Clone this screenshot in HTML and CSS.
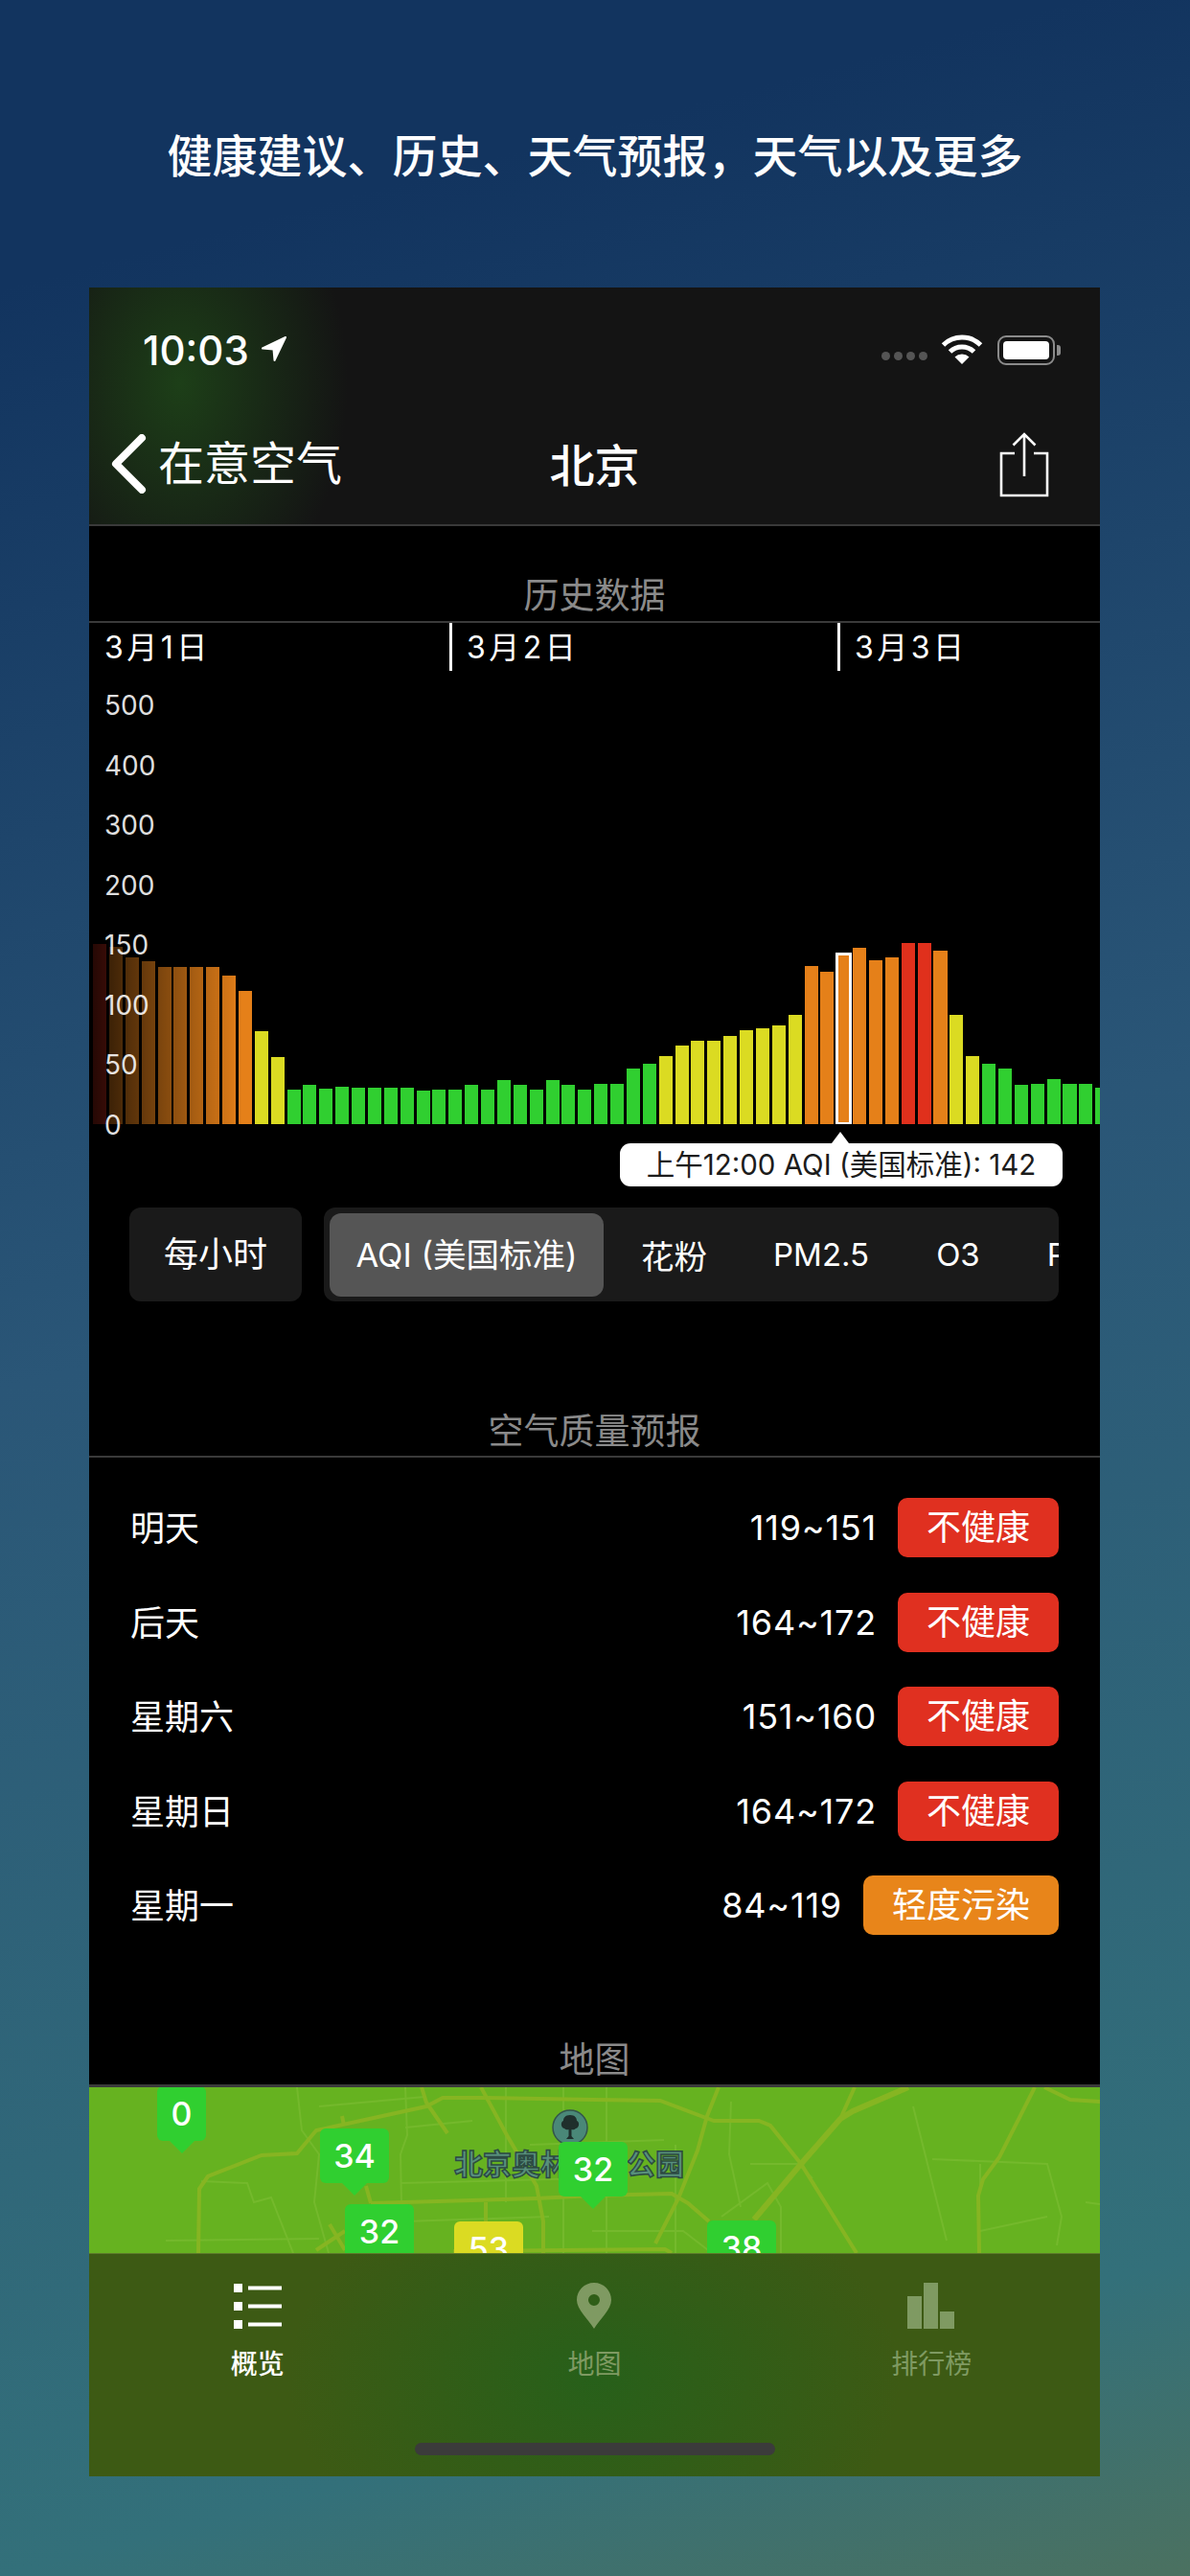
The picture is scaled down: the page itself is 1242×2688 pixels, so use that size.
FILE: index.html
```html
<!DOCTYPE html>
<html lang="zh-CN">
<head>
  <meta charset="UTF-8" />
  <meta name="viewport" content="width=device-width, initial-scale=1.0"/>
  <title>在意空气 - 北京</title>
  <link rel="stylesheet" href="styles.css">
</head>
<body>
  <h1 class="hero">健康建议、历史、天气预报，天气以及更多</h1>

  <div class="phone">
    <header class="top">
      <div class="status">
        <span class="clock">10:03</span>
        <svg class="loc-arrow" width="28" height="28" viewBox="0 0 28 28"><path d="M26 2 L2 13.500 L13.500 14.500 L14.500 26 Z" fill="#fff" stroke="#fff" stroke-width="2" stroke-linejoin="round"/></svg>
        <div class="status-right">
          <div class="signal"><i></i><i></i><i></i><i></i></div>
          <svg width="44" height="32" viewBox="0 0 44 32">
            <path d="M2.5 11 A28 28 0 0 1 41.5 11" fill="none" stroke="#fff" stroke-width="5"/>
            <path d="M9.5 18 A18 18 0 0 1 34.5 18" fill="none" stroke="#fff" stroke-width="5"/>
            <path d="M22 31 L14.5 23.5 A11 11 0 0 1 29.5 23.5 Z" fill="#fff"/>
          </svg>
          <div class="battery"><div class="battery-fill"></div></div>
          <div class="battery-nub"></div>
        </div>
      </div>
      <nav class="navbar">
        <div class="nav-back">
          <svg width="38" height="62" viewBox="0 0 38 62"><path d="M33 4 L6 31 L33 58" fill="none" stroke="#fff" stroke-width="8" stroke-linecap="round" stroke-linejoin="round"/></svg>
          <span>在意空气</span>
        </div>
        <div class="nav-title">北京</div>
        <svg class="nav-share" width="54" height="68" viewBox="0 0 54 68">
          <path d="M17 22 H3 V66 H51 V22 H37" fill="none" stroke="#fff" stroke-width="2.6"/>
          <path d="M27 46 V2 M15.5 13.5 L27 2 L38.5 13.5" fill="none" stroke="#fff" stroke-width="2.6"/>
        </svg>
      </nav>
    </header>

    <h2 class="section-title history-title">历史数据</h2>

    <div class="dates">
      <div class="date-cell first">3月1日</div>
      <div class="date-cell second">3月2日</div>
      <div class="date-cell">3月3日</div>
    </div>

    <div class="chart">
      <div class="bars">
        <div class="bar red" style="height:188px"></div><div class="bar orange" style="height:185px"></div><div class="bar orange" style="height:174px"></div><div class="bar orange" style="height:170px"></div>
        <div class="bar orange" style="height:164px"></div><div class="bar orange" style="height:164px"></div><div class="bar orange" style="height:164px"></div><div class="bar orange" style="height:164px"></div>
        <div class="bar orange" style="height:155px"></div><div class="bar orange" style="height:139px"></div><div class="bar yellow" style="height:97px"></div><div class="bar yellow" style="height:70px"></div>
        <div class="bar green" style="height:36px"></div><div class="bar green" style="height:41px"></div><div class="bar green" style="height:37px"></div><div class="bar green" style="height:39px"></div>
        <div class="bar green" style="height:38px"></div><div class="bar green" style="height:38px"></div><div class="bar green" style="height:38px"></div><div class="bar green" style="height:38px"></div>
        <div class="bar green" style="height:35px"></div><div class="bar green" style="height:36px"></div><div class="bar green" style="height:36px"></div><div class="bar green" style="height:41px"></div>
        <div class="bar green" style="height:36px"></div><div class="bar green" style="height:46px"></div><div class="bar green" style="height:41px"></div><div class="bar green" style="height:36px"></div>
        <div class="bar green" style="height:46px"></div><div class="bar green" style="height:41px"></div><div class="bar green" style="height:36px"></div><div class="bar green" style="height:42px"></div>
        <div class="bar green" style="height:42px"></div><div class="bar green" style="height:58px"></div><div class="bar green" style="height:63px"></div><div class="bar yellow" style="height:71px"></div>
        <div class="bar yellow" style="height:82px"></div><div class="bar yellow" style="height:87px"></div><div class="bar yellow" style="height:87px"></div><div class="bar yellow" style="height:92px"></div>
        <div class="bar yellow" style="height:98px"></div><div class="bar yellow" style="height:100px"></div><div class="bar yellow" style="height:103px"></div><div class="bar yellow" style="height:114px"></div>
        <div class="bar orange" style="height:165px"></div><div class="bar orange" style="height:159px"></div><div class="bar orange selected" style="height:174px"></div><div class="bar orange" style="height:184px"></div>
        <div class="bar orange" style="height:171px"></div><div class="bar orange" style="height:174px"></div><div class="bar red" style="height:189px"></div><div class="bar red" style="height:189px"></div>
        <div class="bar orange" style="height:181px"></div><div class="bar yellow" style="height:114px"></div><div class="bar yellow" style="height:71px"></div><div class="bar green" style="height:63px"></div>
        <div class="bar green" style="height:58px"></div><div class="bar green" style="height:41px"></div><div class="bar green" style="height:42px"></div><div class="bar green" style="height:47px"></div>
        <div class="bar green" style="height:42px"></div><div class="bar green" style="height:42px"></div><div class="bar green" style="height:38px"></div>
      </div>
      <div class="bars-fade"></div>
      <div class="y-axis">
        <span>500</span><span>400</span><span>300</span><span>200</span><span>150</span><span>100</span><span>50</span><span>0</span>
      </div>
      <div class="tooltip">上午12:00 AQI (美国标准): 142</div>
    </div>

    <div class="controls">
      <div class="hourly">每小时</div>
      <div class="segments">
        <div class="segment active">AQI (美国标准)</div>
        <div class="segment cjk">花粉</div>
        <div class="segment">PM2.5</div>
        <div class="segment">O3</div>
        <div class="segment">PM10</div>
      </div>
    </div>

    <h2 class="section-title forecast-title">空气质量预报</h2>

    <div class="forecast">
      <div class="row"><span class="day">明天</span><span class="range">119~151</span><span class="level bad">不健康</span></div>
      <div class="row"><span class="day">后天</span><span class="range">164~172</span><span class="level bad">不健康</span></div>
      <div class="row"><span class="day">星期六</span><span class="range">151~160</span><span class="level bad">不健康</span></div>
      <div class="row"><span class="day">星期日</span><span class="range">164~172</span><span class="level bad">不健康</span></div>
      <div class="row"><span class="day">星期一</span><span class="range">84~119</span><span class="level light">轻度污染</span></div>
    </div>

    <h2 class="section-title map-title">地图</h2>

    <div class="map">
      <svg class="roads" width="1055" height="173" viewBox="0 0 1055 173">
        <g fill="none" stroke="#74b92c" stroke-width="2">
          <path d="M217 0 L222 45 L240 70 L235 120 L250 173"/>
          <path d="M330 0 L332 50 L325 70 L327 173"/>
          <path d="M240 20 L350 10 M330 42 L400 35 M325 100 L520 95 M330 140 L480 135"/>
          <path d="M117 98 L165 100 L172 120 L190 115 L213 173"/>
          <path d="M80 160 L240 158"/>
          <path d="M435 0 V120 M495 0 V173 M540 0 V173 M612 60 V173 M460 60 L600 55"/>
          <path d="M525 150 H620 L650 173"/>
          <path d="M670 15 L668 70 L680 125 M660 135 L708 100 L722 125 V173 M690 80 H740 L755 95"/>
          <path d="M860 20 L875 80 L895 160 M880 75 L1000 80 L1015 135 L1010 165 M930 150 L1000 135 M1040 120 L1055 122"/>
          <path d="M930 80 V110"/>
        </g>
        <g fill="none" stroke="#86b522" stroke-width="4">
          <path d="M114 173 L115 106 L124 93 L180 71 L217 69 L237 45 L352 20 L369 11 L409 11 L527 13 L596 14 L652 35 L699 35 L711 40 L743 80 L801 173"/>
          <path d="M591 163 L615 116 L635 66 L645 30 L657 0"/>
          <path d="M784 33 L799 0"/>
          <path d="M929 173 L928 113 L933 96 L950 73 L987 0"/>
          <path d="M997 0 L1024 13 L1057 15"/>
          <path d="M294 121 L467 116 L527 113 L608 111 L625 121 L647 140"/>
          <path d="M289 103 L294 121 M264 30 L266 40"/>
          <path d="M347 0 L352 16 L374 48"/>
          <path d="M409 0 L436 50 L467 103 L474 140 L474 173"/>
          <path d="M414 120 V173 M237 170 L267 150 M251 143 L267 170"/>
          <path d="M380 171 L601 169 L608 173"/>
        </g>
        <path d="M694 138 L743 80 L784 33 L797 25 L855 0" fill="none" stroke="#86b522" stroke-width="6"/>
      </svg>

      <svg class="park-icon" width="38" height="38" viewBox="0 0 38 38">
        <circle cx="19" cy="19" r="18" fill="#4a8878" stroke="#33544c" stroke-width="1.5"/>
        <path d="M19 6 C24 6 26 9 26 12 C29 13 29 19 25 20 C23 22 21 21 20.500 21 V28 L23 31 H15 L17.500 28 V21 C17 21 15 22 13 20 C9 19 9 13 12 12 C12 9 14 6 19 6 Z" fill="#1f2f2c"/>
      </svg>
      <div class="park-label">北京奥林匹克公园</div>

      <div class="pin green narrow pin-a">0</div>
      <div class="pin green pin-b">34</div>
      <div class="pin green pin-c">32</div>
      <div class="pin yellow pin-d">53</div>
      <div class="pin green pin-e">32</div>
      <div class="pin green pin-f">38</div>

      <div class="tabbar">
        <div class="tab active">
          <svg width="50" height="48" viewBox="0 0 50 48" fill="#fff">
            <rect x="0" y="1" width="9" height="9"/><rect x="15" y="3.500" width="35" height="4"/>
            <rect x="0" y="20" width="9" height="9"/><rect x="15" y="22.500" width="35" height="4"/>
            <rect x="0" y="39" width="9" height="9"/><rect x="15" y="41.500" width="35" height="4"/>
          </svg>
          <span>概览</span>
        </div>
        <div class="tab">
          <svg width="36" height="48" viewBox="0 0 36 48"><path fill-rule="evenodd" d="M18 0 C28 0 36 8 36 18 C36 28 24 38 18 48 C12 38 0 28 0 18 C0 8 8 0 18 0 Z M18 12 A6 6 0 1 0 18 24 A6 6 0 1 0 18 12 Z" fill="#7f9a62"/></svg>
          <span>地图</span>
        </div>
        <div class="tab">
          <svg width="50" height="48" viewBox="0 0 50 48" fill="#7f9a62">
            <rect x="0" y="14" width="15" height="34"/><rect x="17" y="0" width="15" height="48"/><rect x="34" y="30" width="15" height="18"/>
          </svg>
          <span>排行榜</span>
        </div>
        <div class="home-indicator"></div>
      </div>
    </div>
  </div>
</body>
</html>
```
FILE: styles.css
```css
* {
  box-sizing: border-box;
}
body {
  margin: 0;
  width: 1242px;
  height: 2688px;
  overflow: hidden;
  font-family: "Inter", "Noto Sans CJK SC", sans-serif;
  background: linear-gradient(165deg, #12345f 10%, #2a5677 48%, #33707a 89%, #4b7160 100%);
  color: #fff;
}
.hero {
  margin: 0;
  height: 300px;
  padding-top: 132px;
  font-size: 47px;
  line-height: 62px;
  font-weight: 500;
  text-align: center;
}
.phone {
  position: relative;
  width: 1055px;
  height: 2284px;
  margin-left: 93px;
  background: black;
  overflow: hidden;
}

/* status bar + nav */
.top {
  height: 249px;
  border-bottom: 2px solid #3a3a3a;
  background: radial-gradient(ellipse 175px 250px at 95px 100px, #1d3f18 0%, rgba(29,63,24,0.55) 45%, rgba(29,63,24,0) 100%), #141414;
}
.status {
  display: flex;
  align-items: center;
  height: 130px;
  padding: 0 41px 0 56px;
}
.clock {
  font-size: 42px;
  font-weight: 500;
  width: 123px;
}
.loc-arrow {
  margin-top: -2px;
}
.status-right {
  margin-left: auto;
  display: flex;
  align-items: center;
}
.signal {
  display: flex;
  gap: 4px;
  margin-right: 14px;
  margin-top: 12px;
}
.signal i {
  width: 9px;
  height: 9px;
  border-radius: 50%;
  background: #555;
}
.battery {
  width: 60px;
  height: 31px;
  margin-left: 15px;
  padding: 4px;
  border: 2px solid #8b8b8b;
  border-radius: 9px;
}
.battery-fill {
  height: 100%;
  border-radius: 4px;
  background: white;
}
.battery-nub {
  width: 4px;
  height: 11px;
  margin-left: 2px;
  border-radius: 0 3px 3px 0;
  background: #8b8b8b;
}
.navbar {
  display: grid;
  grid-template-columns: 1fr auto 1fr;
  align-items: center;
  height: 108px;
  padding: 0 22px;
}
.nav-back {
  display: flex;
  align-items: center;
  gap: 12px;
  font-size: 48px;
  line-height: 60px;
}
.nav-title {
  font-size: 47px;
  font-weight: 500;
  margin-top: -3px;
}
.nav-share {
  justify-self: end;
  margin-right: 30px;
  margin-top: 2px;
}

/* section headings */
.section-title {
  margin: 0;
  display: flex;
  align-items: flex-end;
  justify-content: center;
  border-bottom: 2px solid #3a3a3a;
  font-size: 37px;
  font-weight: 400;
  line-height: 50px;
  color: #8a8a8a;
}
.history-title {
  height: 101px;
  padding-bottom: 1px;
}
.forecast-title {
  height: 163px;
}
.map-title {
  height: 140px;
  border-bottom-width: 3px;
}

/* chart */
.dates {
  display: flex;
  height: 50px;
  font-size: 32px;
  line-height: 52px;
  letter-spacing: 3.5px;
}
.date-cell {
  padding-left: 15px;
  border-left: 3px solid white;
}
.date-cell.first {
  width: 376px;
  padding-left: 16px;
  border-left: 0;
}
.date-cell.second {
  width: 405px;
}
.chart {
  position: relative;
  height: 560px;
}
.bars {
  display: flex;
  align-items: flex-end;
  gap: 2.85px;
  height: 473px;
  padding-left: 4px;
  overflow: hidden;
}
.bar {
  flex: none;
  width: 14.04px;
}
.bar.green { background: #30cf30; }
.bar.yellow { background: #dbdb22; }
.bar.orange { background: #e58019; }
.bar.red { background: #e0301c; }
.bar.selected {
  box-sizing: content-box;
  width: 11px;
  margin: 0 -1.500px;
  border: 3px solid white;
  border-bottom-width: 2px;
}
.bars-fade {
  position: absolute;
  top: 0;
  left: 0;
  width: 160px;
  height: 473px;
  background: linear-gradient(to right, rgba(0,0,0,0.85), rgba(0,0,0,0));
}
.y-axis {
  position: absolute;
  top: 5px;
  left: 16px;
  display: grid;
  grid-auto-rows: 62.5px;
  font-size: 28px;
  line-height: 62.5px;
  color: rgba(255,255,255,0.88);
}
.tooltip {
  position: absolute;
  top: 493px;
  left: 554px;
  width: 462px;
  height: 45px;
  border-radius: 11px;
  background: white;
  color: #1c1c1c;
  font-size: 29.500px;
  line-height: 45px;
  text-align: center;
}
.tooltip::before {
  content: "";
  position: absolute;
  top: -12px;
  left: 221px;
  border: 9px solid transparent;
  border-top: 0;
  border-bottom: 12px solid white;
}

/* selectors under the chart */
.controls {
  display: flex;
  gap: 23px;
  height: 98px;
  padding: 0 43px 0 42px;
  font-size: 33px;
}
.hourly {
  flex: none;
  width: 180px;
  border-radius: 12px;
  background: #1a1a1a;
  font-size: 36px;
  line-height: 98px;
  text-align: center;
}
.segments {
  flex: 1;
  display: flex;
  align-items: center;
  padding-left: 6px;
  border-radius: 12px;
  background: #1a1a1a;
  overflow: hidden;
  white-space: nowrap;
}
.segment {
  flex: none;
  padding: 0 35px;
}
.segment.cjk {
  font-size: 34.500px;
  padding: 0 34px;
}
.segment.active {
  width: 286px;
  height: 87px;
  margin-right: 5px;
  padding: 0;
  border-radius: 12px;
  background: #555;
  font-size: 34.500px;
  line-height: 87px;
  text-align: center;
}

/* forecast */
.forecast {
  padding-top: 24px;
}
.row {
  display: flex;
  align-items: center;
  height: 98.5px;
  padding: 0 43px;
  font-size: 36px;
}
.day {
  margin-right: auto;
  margin-top: -4px;
}
.range {
  margin-right: 22px;
  letter-spacing: 0.8px;
}
.level {
  height: 62px;
  padding: 0 30px;
  border-radius: 10px;
  line-height: 62px;
}
.level.bad { background: #e03020; }
.level.light { background: #e8851a; }

/* map */
.map {
  position: relative;
  height: 407px;
  background: #66b220;
  overflow: hidden;
}
.roads {
  position: absolute;
  top: 0;
  left: 0;
}
.park-icon {
  position: absolute;
  top: 23px;
  left: 483px;
}
.park-label {
  position: absolute;
  top: 60px;
  left: 381px;
  font-size: 30px;
  line-height: 40px;
  font-weight: 700;
  color: #58907c;
  -webkit-text-stroke: 1.5px #2c4a44;
  white-space: nowrap;
}
.pin {
  position: absolute;
  width: 72px;
  height: 57px;
  border-radius: 6px;
  font-size: 34px;
  font-weight: 500;
  line-height: 57px;
  text-align: center;
}
.pin::after {
  content: "";
  position: absolute;
  top: 100%;
  left: 50%;
  margin-left: -13px;
  border: 13px solid transparent;
  border-bottom: 0;
}
.pin.green { background: #30cf30; }
.pin.green::after { border-top-color: #30cf30; }
.pin.yellow { background: #dbdb22; }
.pin.yellow::after { border-top-color: #dbdb22; }
.pin.narrow { width: 51px; }
.pin-a { top: -1px; left: 71px; }
.pin-b { top: 43px; left: 241px; }
.pin-c { top: 122px; left: 267px; }
.pin-d { top: 140px; left: 381px; }
.pin-e { top: 57px; left: 490px; }
.pin-f { top: 139px; left: 645px; }

/* tab bar */
.tabbar {
  position: absolute;
  top: 173px;
  left: 0;
  width: 100%;
  height: 234px;
  display: grid;
  grid-template-columns: repeat(3, 1fr);
  align-items: start;
  padding-top: 30px;
  border-top: 1px solid #5d7a2a;
  background: radial-gradient(ellipse 320px 220px at 527px 130px, #27601a, rgba(39,96,26,0) 100%), #3d5a14;
}
.tab {
  display: flex;
  flex-direction: column;
  align-items: center;
  gap: 19px;
  font-size: 28px;
  line-height: 36px;
  color: #7f9a62;
}
.tab.active {
  color: white;
  font-weight: 500;
}
.home-indicator {
  position: absolute;
  left: 340px;
  bottom: 23px;
  width: 376px;
  height: 13px;
  border-radius: 7px;
  background: #3b3b3b;
}
```
